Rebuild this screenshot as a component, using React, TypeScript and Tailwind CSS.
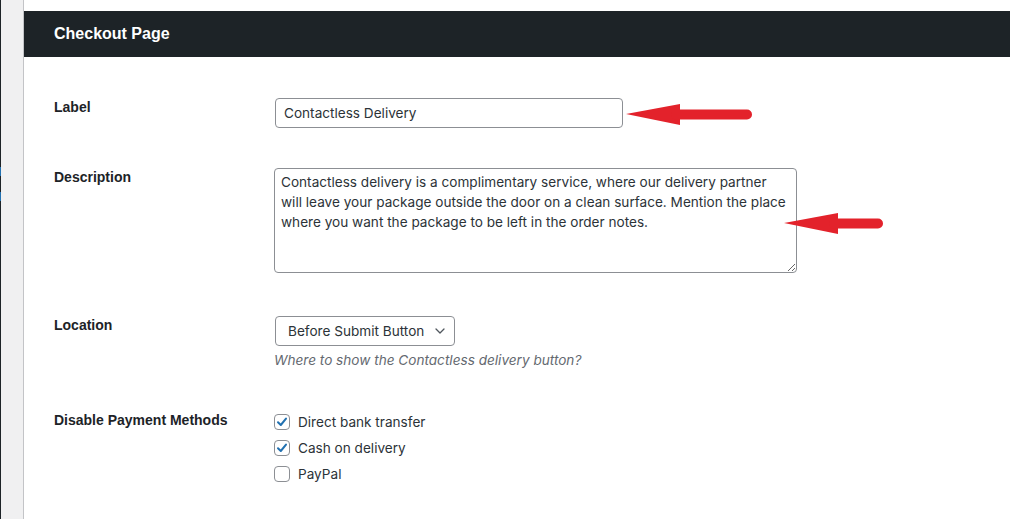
import React from "react";

const DESCRIPTION =
  "Contactless delivery is a complimentary service, where our delivery partner\nwill leave your package outside the door on a clean surface. Mention the place\nwhere you want the package to be left in the order notes.";

const METHODS = [
  { label: "Direct bank transfer", checked: true },
  { label: "Cash on delivery", checked: true },
  { label: "PayPal", checked: false },
];

function Checkbox({ checked }: { checked: boolean }) {
  return (
    <span className="flex h-4 w-4 shrink-0 items-center justify-center rounded-[4px] border border-[#8c8f94] bg-white">
      {checked && (
        <svg width="14" height="14" viewBox="0 0 14 14" fill="none">
          <path
            d="M3 7.2 L5.8 10 L11 3.6"
            stroke="#2271b1"
            strokeWidth="2"
            strokeLinecap="round"
            strokeLinejoin="round"
          />
        </svg>
      )}
    </span>
  );
}

// red annotation arrow, tip pointing left
function Arrow({ className, length }: { className: string; length: number }) {
  return (
    <svg
      className={className}
      width={length}
      height="24"
      viewBox={`0 0 ${length} 24`}
      fill="none"
    >
      <path d="M0 11 L54 1 L54 22 Z" fill="#e3222b" />
      <line
        x1="50"
        y1="11.5"
        x2={length - 6}
        y2="11.5"
        stroke="#e3222b"
        strokeWidth="10"
        strokeLinecap="round"
      />
    </svg>
  );
}

export default function App() {
  return (
    <div className="relative flex h-[519px] w-full overflow-hidden bg-white font-['Liberation_Sans',Arial,sans-serif] text-[14px] text-[#2c3338]">
      {/* admin sidebar edge */}
      <div className="flex h-full w-[24px] shrink-0 border-r border-[#c3c4c7] bg-[#f0f0f1]">
        <div className="flex h-full w-px flex-col bg-[#1d2327]">
          <div className="mt-[167px] h-[9px] w-px bg-[#2271b1]" />
          <div className="mt-[16px] h-[9px] w-px bg-[#2271b1]" />
        </div>
      </div>

      <div className="flex-1 pt-[11px]">
        <div className="flex h-[46px] items-center bg-[#1d2327] pb-px pl-[30px]">
          <h2 className="text-[16px] leading-5 font-bold text-white">Checkout Page</h2>
        </div>

        <div className="pl-[30px] pt-[40px]">
          {/* Label */}
          <div className="flex items-start">
            <div className="w-[220px] shrink-0 leading-5 font-bold text-[#1d2327]">
              Label
            </div>
            <input
              readOnly
              value="Contactless Delivery"
              className="mt-px ml-px h-[30px] w-[348px] rounded-[4px] border border-[#8c8f94] bg-white px-[8px] font-['Inter',sans-serif] text-[13.6px] leading-5 text-[#2c3338] outline-none"
            />
          </div>

          {/* Description */}
          <div className="mt-[39px] flex items-start">
            <div className="w-[220px] shrink-0 leading-5 font-bold text-[#1d2327]">
              Description
            </div>
            <textarea
              readOnly
              value={DESCRIPTION}
              className="mt-px h-[105px] w-[523px] resize overflow-hidden rounded-[4px] border border-[#8c8f94] bg-white px-[6px] pt-[3px] font-['Inter',sans-serif] text-[13.6px] leading-5 whitespace-pre text-[#2c3338] outline-none"
            />
          </div>

          {/* Location */}
          <div className="mt-[42px] flex items-start">
            <div className="w-[220px] shrink-0 leading-5 font-bold text-[#1d2327]">
              Location
            </div>
            <div className="flex flex-col font-['Inter',sans-serif] text-[13.6px]">
              <div className="mt-px ml-px flex h-[30px] w-[180px] items-center justify-between rounded-[4px] border border-[#8c8f94] bg-white pr-[9px] pl-[12px]">
                <span className="leading-5">Before Submit Button</span>
                <svg width="10" height="6" viewBox="0 0 10 6" fill="none">
                  <path
                    d="M1 1 L5 5 L9 1"
                    stroke="#50575e"
                    strokeWidth="1.3"
                    strokeLinecap="round"
                    strokeLinejoin="round"
                  />
                </svg>
              </div>
              <p className="mt-[4px] leading-5 text-[#646970] italic">
                Where to show the Contactless delivery button?
              </p>
            </div>
          </div>

          {/* Disable Payment Methods */}
          <div className="mt-[40px] flex items-start">
            <div className="w-[220px] shrink-0 leading-5 font-bold text-[#1d2327]">
              Disable Payment Methods
            </div>
            <div className="-mt-[1px] flex flex-col font-['Inter',sans-serif] text-[13.6px]">
              {METHODS.map((m) => (
                <label key={m.label} className="flex h-[26px] items-center gap-[8px]">
                  <Checkbox checked={m.checked} />
                  <span className="leading-5 text-[#2c3338]">{m.label}</span>
                </label>
              ))}
            </div>
          </div>
        </div>
      </div>

      <Arrow className="absolute top-[103px] left-[626px]" length={127} />
      <Arrow className="absolute top-[212px] left-[784px]" length={100} />
    </div>
  );
}
